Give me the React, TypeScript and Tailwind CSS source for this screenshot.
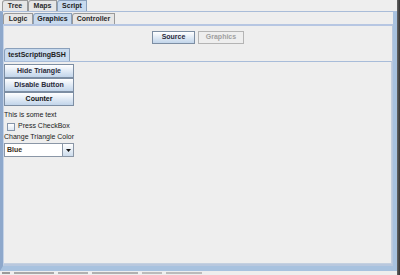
import React from 'react';

// Swing "Ocean" look: tabbed panes, gradient buttons, combo box
const tabBase = 'h-full flex items-center justify-center border border-b-0 rounded-tl-[3px] text-[7px] font-bold';

function Tab({ label, w, selected }: { label: string; w: string; selected?: boolean }) {
  return (
    <div
      className={`${tabBase} ${w} ${
        selected ? 'bg-[#c8daee] border-[#8aa0bb] text-[#1d1d1d]' : 'bg-[#e6e6e6] border-[#9a9a9a] text-[#2a2a2a]'
      }`}
    >
      {label}
    </div>
  );
}

function GradButton({ label, className = '' }: { label: string; className?: string }) {
  return (
    <div
      className={`flex items-center justify-center border border-[#7d8ea3] bg-gradient-to-b from-[#ffffff] to-[#c2d5ea] text-[7px] font-bold text-[#2a2a3a] ${className}`}
    >
      {label}
    </div>
  );
}

export default function App() {
  return (
    <div className="w-[400px] h-[275px] bg-[#eeeeee] overflow-hidden flex font-['Liberation_Sans',Arial,sans-serif]">
      <div className="w-[397px] h-full flex flex-col">
        {/* top level tabs */}
        <div className="h-[11px] flex pl-[2px] shrink-0">
          <Tab label="Tree" w="w-[26px]" />
          <Tab label="Maps" w="w-[29px]" />
          <Tab label="Script" w="w-[30px]" selected />
        </div>

        {/* outer pane */}
        <div className="h-[260px] flex flex-col border-t border-t-[#a9bcd8] border-l-[3px] border-l-[#8ea8cb] border-r-[4px] border-r-[#a8c2df] border-b-[5px] border-b-[#a8c2df] bg-[#eeeeee]">
          {/* second level tabs */}
          <div className="h-[12px] flex pt-[1px] shrink-0">
            <Tab label="Logic" w="w-[30px]" />
            <Tab label="Graphics" w="w-[39px]" selected />
            <Tab label="Controller" w="w-[43px]" />
          </div>

          <div className="flex-1 flex flex-col border-t-2 border-t-[#b6c6e2] border-l border-l-[#c4d2e6] border-r border-r-[#b9c8de] border-b-2 border-b-[#b9c8de]">
            {/* source / graphics switch */}
            <div className="flex justify-center gap-[3px] pt-[5px] shrink-0">
              <GradButton label="Source" className="w-[43px] h-[13px] border-[#6a7a8e]" />
              <div className="w-[46px] h-[13px] flex items-center justify-center border border-[#b4b4b4] bg-[#eeeeee] text-[7px] font-bold text-[#a0a0a0]">
                Graphics
              </div>
            </div>

            {/* script tab */}
            <div className="h-[13px] flex mt-[4px] shrink-0">
              <Tab label="testScriptingBSH" w="w-[66px]" selected />
            </div>
            <div className="flex-1 flex flex-col border-t border-t-[#a8bcd9] border-r border-r-[#c4d0e0] border-b border-b-[#c4d0e0] pt-[2px]">
              <div className="w-[70px] flex flex-col">
                <GradButton label="Hide Triangle" className="h-[14px]" />
                <GradButton label="Disable Button" className="h-[14px]" />
                <GradButton label="Counter" className="h-[14px] text-[#111]" />
              </div>

              <div className="h-[11px] mt-[4px] flex items-center text-[7px] text-[#1a1a1a]">This is some text</div>
              <div className="h-[11px] flex items-center gap-[3px] pl-[3px] text-[7px] text-[#1a1a1a]">
                <div className="w-[8px] h-[8px] border border-[#8595ab] bg-gradient-to-b from-[#ffffff] to-[#dfe8f2]" />
                <span>Press CheckBox</span>
              </div>
              <div className="h-[11px] flex items-center text-[7px] text-[#1a1a1a]">Change Triangle Color</div>
              <div className="w-[70px] h-[14px] flex border border-[#8a96a6] bg-white">
                <div className="flex-1 flex items-center pl-[2px] text-[7px] font-bold text-[#3a3020]">Blue</div>
                <div className="w-[11px] flex items-center justify-center border-l border-[#8a96a6] bg-gradient-to-b from-[#ffffff] to-[#cddcec]">
                  <svg width="5" height="3" viewBox="0 0 5 3">
                    <path d="M0 0H5L2.5 3Z" fill="#111" />
                  </svg>
                </div>
              </div>
            </div>
          </div>
        </div>

        {/* cut off text of the page below */}
        <div className="flex-1 flex items-end gap-[4px] pl-[2px] pb-px">
          <div className="w-[8px] h-[2px] bg-[#9a9a9a]" />
          <div className="w-[40px] h-[2px] bg-[#a8a8a8]" />
          <div className="w-[30px] h-[2px] bg-[#b0b0b0]" />
          <div className="w-[46px] h-[2px] bg-[#b0b0b0]" />
          <div className="w-[20px] h-[2px] bg-[#bbbbbb]" />
          <div className="w-[36px] h-[2px] bg-[#bbbbbb]" />
        </div>
      </div>
      <div className="w-[3px] h-full bg-gradient-to-r from-[#666] to-[#333]" />
    </div>
  );
}
